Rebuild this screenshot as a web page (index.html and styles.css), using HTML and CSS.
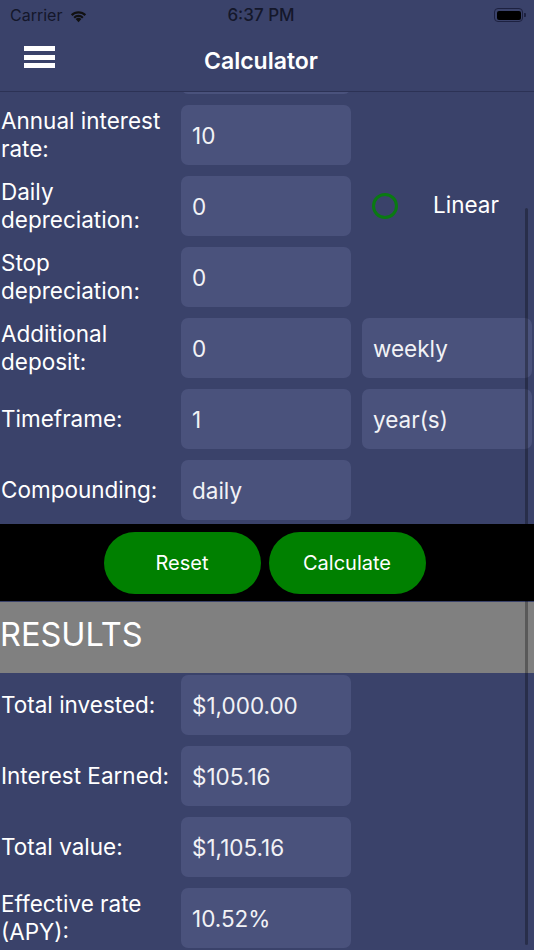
FILE: index.html
```html
<!DOCTYPE html>
<html lang="en">
<head>
<meta charset="utf-8">
<title>Calculator</title>
<link rel="stylesheet" href="styles.css">
</head>
<body>
<div class="screen">
  <header class="top">
    <div class="status">
      <span class="carrier">Carrier
        <svg class="wifi" width="19" height="14" viewBox="0 0 19 14">
          <path d="M9.5 13.2 L6.6 10.1 A4.2 4.2 0 0 1 12.4 10.1 Z" fill="#111"/>
          <path d="M4.4 7.9 A7.3 7.3 0 0 1 14.6 7.9 L13.1 9.5 A5.2 5.2 0 0 0 5.9 9.5 Z" fill="#111"/>
          <path d="M1.9 5.3 A10.8 10.8 0 0 1 17.1 5.3 L15.6 6.9 A8.7 8.7 0 0 0 3.4 6.9 Z" fill="#111"/>
        </svg>
      </span>
      <span class="time">6:37 PM</span>
      <span class="battery"><span class="battery-fill"></span></span>
    </div>
    <nav class="navbar">
      <span class="menu" aria-label="Menu"><i></i><i></i><i></i></span>
      <h1 class="title">Calculator</h1>
    </nav>
  </header>

  <main class="scroll">
    <section class="form">
      <div class="label"></div><div class="field"></div><div></div>

      <div class="label">Annual interest rate:</div>
      <div class="field">10</div>
      <div></div>

      <div class="label">Daily depreciation:</div>
      <div class="field">0</div>
      <div class="radio"><span class="ring"></span><span class="radio-text">Linear</span></div>

      <div class="label">Stop depreciation:</div>
      <div class="field">0</div>
      <div></div>

      <div class="label">Additional deposit:</div>
      <div class="field">0</div>
      <div class="field wide">weekly</div>

      <div class="label">Timeframe:</div>
      <div class="field">1</div>
      <div class="field wide">year(s)</div>

      <div class="label">Compounding:</div>
      <div class="field">daily</div>
      <div></div>
    </section>

    <div class="actions">
      <button class="btn" type="button">Reset</button>
      <button class="btn" type="button">Calculate</button>
    </div>

    <h2 class="results-head">RESULTS</h2>

    <section class="form results">
      <div class="label">Total invested:</div>
      <div class="field">$1,000.00</div>
      <div></div>

      <div class="label">Interest Earned:</div>
      <div class="field">$105.16</div>
      <div></div>

      <div class="label">Total value:</div>
      <div class="field">$1,105.16</div>
      <div></div>

      <div class="label">Effective rate (APY):</div>
      <div class="field">10.52%</div>
      <div></div>
    </section>

    <span class="scrollbar"></span>
  </main>
</div>
</body>
</html>
```

FILE: styles.css
```css
* { box-sizing: border-box; }

html, body {
  margin: 0;
  padding: 0;
  background: #3a426a;
}

body {
  font-family: Inter, Roboto, "Liberation Sans", sans-serif;
  color: #fff;
  overflow: hidden;
}

.screen {
  width: 534px;
  height: 950px;
  overflow: hidden;
  position: relative;
  background: #3a426a;
}

/* status bar + navigation bar */
.top {
  position: relative;
  z-index: 2;
  background: #3a426a;
  border-bottom: 1px solid #2c3255;
}

.status {
  height: 30px;
  display: flex;
  align-items: center;
  justify-content: space-between;
  padding: 0 11px 0 10px;
  color: #14172a;
  font-size: 16px;
  position: relative;
}

.carrier {
  display: flex;
  align-items: center;
  gap: 7px;
}

.wifi { margin-top: 1px; }

.time {
  position: absolute;
  left: 0;
  right: 12px;
  text-align: center;
  font-weight: 500;
  font-size: 17px;
}

.battery {
  width: 29px;
  height: 14px;
  border: 1.5px solid #1d2140;
  border-radius: 4px;
  padding: 1.5px;
  position: relative;
}

.battery::after {
  content: "";
  position: absolute;
  right: -4px;
  top: 4px;
  width: 2px;
  height: 4px;
  background: #1d2140;
  border-radius: 0 1px 1px 0;
}

.battery-fill {
  display: block;
  width: 100%;
  height: 100%;
  background: #000;
  border-radius: 2px;
}

.navbar {
  height: 61px;
  display: flex;
  align-items: center;
  justify-content: center;
  padding-right: 12px;
  position: relative;
}

.menu {
  position: absolute;
  left: 24px;
  top: 16px;
  display: flex;
  flex-direction: column;
  gap: 3.5px;
}

.menu i {
  display: block;
  width: 31px;
  height: 5px;
  background: #fff;
}

.title {
  margin: 0;
  font-size: 23px;
  font-weight: 600;
}

/* scrolling content */
.scroll {
  position: relative;
  height: 858px;
  overflow: hidden;
}

.form {
  display: grid;
  grid-template-columns: 181px 170px 181px;
  grid-auto-rows: 60px;
  row-gap: 11px;
  margin-top: -58px;
  padding-bottom: 4px;
  align-items: center;
}

.label {
  font-size: 22.5px;
  line-height: 28px;
  padding-left: 1px;
  padding-right: 1px;
}

.field {
  height: 60px;
  background: #4a527c;
  border-radius: 7px;
  display: flex;
  align-items: center;
  padding-left: 11px;
  font-size: 22.5px;
  color: #f2f2f6;
}

.field.wide {
  margin-left: 11px;
  width: 170px;
}

.radio {
  display: flex;
  align-items: center;
  padding-left: 21px;
  height: 60px;
  margin-top: -1px;
}

.ring {
  width: 26px;
  height: 26px;
  border: 3px solid #0a7a12;
  border-radius: 50%;
}

.radio-text {
  font-size: 22.5px;
  margin-left: 35px;
  margin-top: -2px;
}

.actions {
  height: 77px;
  background: #000;
  display: flex;
  justify-content: center;
  align-items: center;
  gap: 8px;
  padding-right: 5px;
}

.btn {
  width: 157px;
  height: 62px;
  border: none;
  border-radius: 31px;
  background: #008000;
  color: #fff;
  font-family: inherit;
  font-size: 20px;
}

.results-head {
  margin: 1px 0 0;
  height: 71px;
  background: #808080;
  font-weight: 400;
  font-size: 32.5px;
  line-height: 66px;
  padding-left: 0;
  color: #fff;
}

.results {
  margin-top: 2px;
}

.scrollbar {
  position: absolute;
  left: 525px;
  top: 116px;
  width: 3px;
  height: 737px;
  border-radius: 2px;
  background: rgba(0, 0, 0, 0.3);
}
```
